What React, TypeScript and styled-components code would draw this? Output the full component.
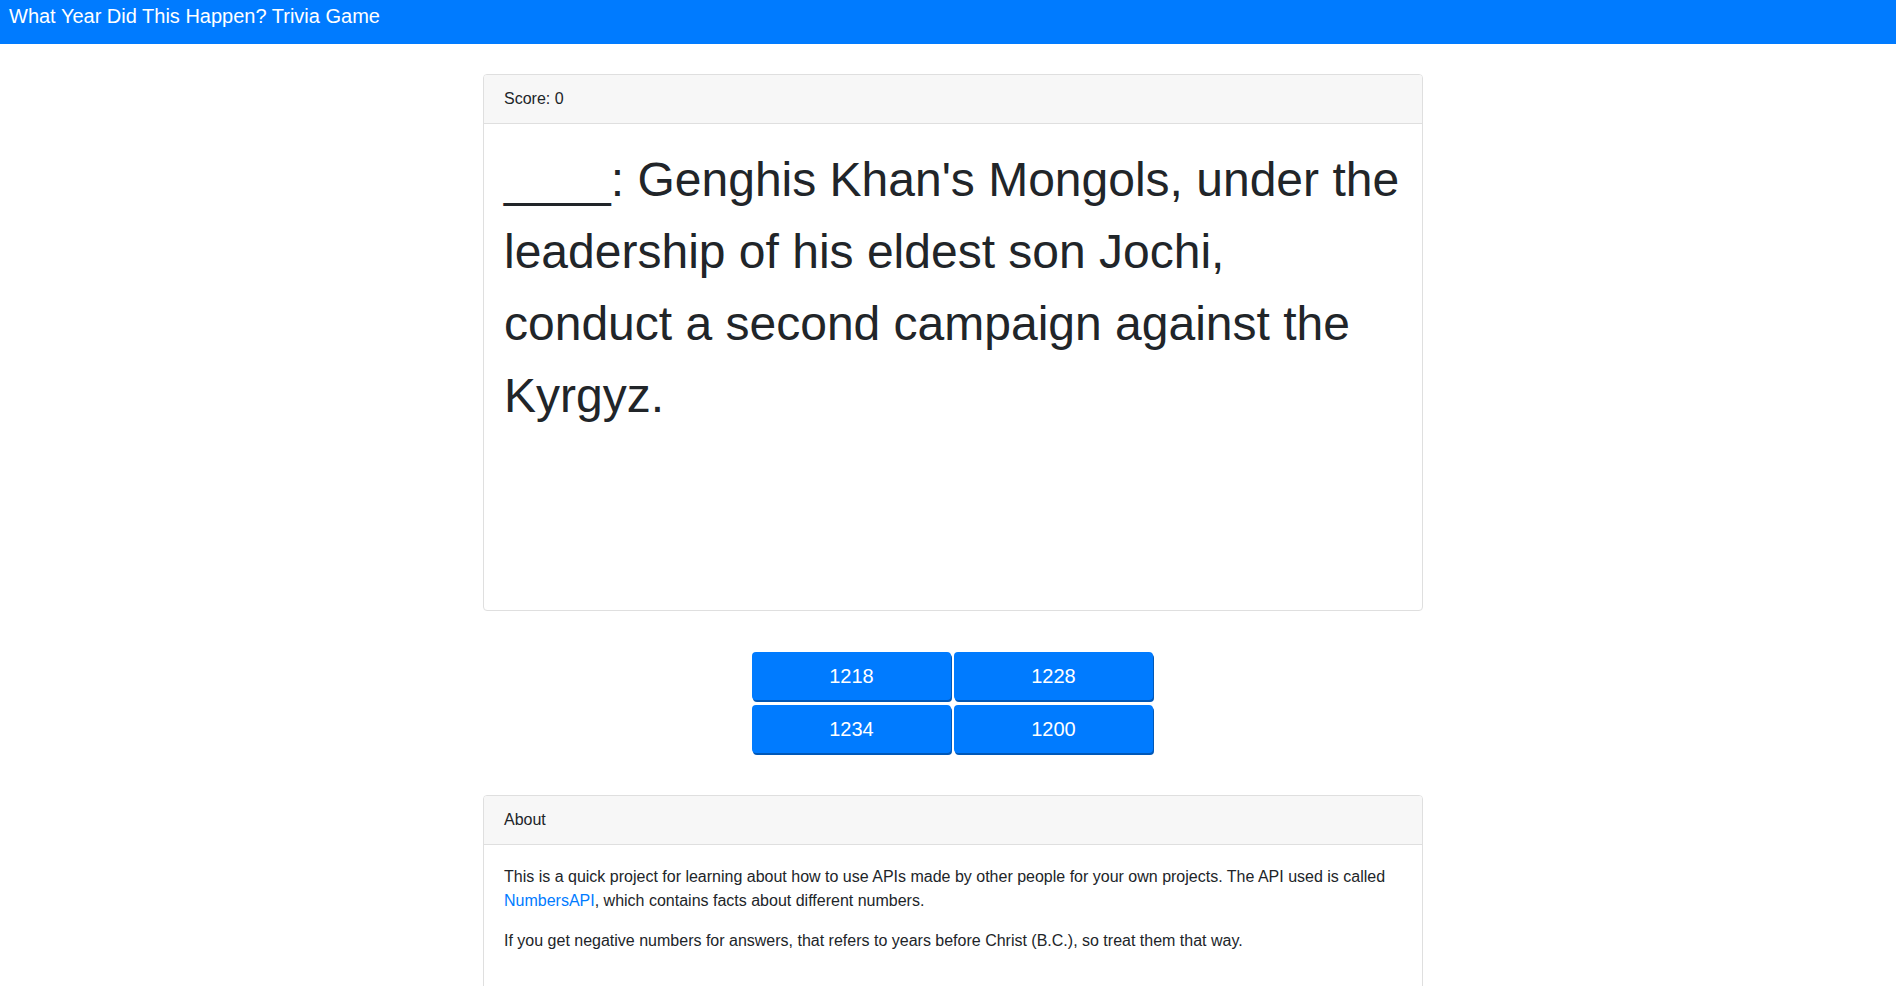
import React from 'react'
import styled, { createGlobalStyle } from 'styled-components'

const GlobalStyle = createGlobalStyle`
  html, body {
    margin: 0;
    padding: 0;
    background: #fff;
    font-family: "Liberation Sans", Arial, sans-serif;
    color: #212529;
    font-size: 16px;
    line-height: 1.5;
  }
  * { box-sizing: border-box; }
`

const TopBar = styled.header`
  height: 44px;
  background: #007bff;
  color: #fff;
  padding: 4px 9px;
  font-size: 20px;
  line-height: 24px;
`

const Page = styled.main`
  padding-left: 10px;
`

const Column = styled.div`
  width: 940px;
  margin: 30px auto 0;
  display: flex;
  flex-direction: column;
`

const Card = styled.section`
  border: 1px solid #dfdfdf;
  border-radius: 4px;
  background: #fff;
  overflow: hidden;
`

const CardHeader = styled.div`
  padding: 12px 20px;
  background: #f7f7f7;
  border-bottom: 1px solid #dfdfdf;
  line-height: 24px;
`

const CardBody = styled.div<{ $minHeight?: number }>`
  padding: 20px;
  min-height: ${p => (p.$minHeight ? `${p.$minHeight}px` : 'auto')};
`

const Question = styled.h1`
  margin: 0;
  font-size: 48px;
  font-weight: 400;
  line-height: 72px;
`

const Answers = styled.div`
  display: grid;
  grid-template-columns: 199px 199px;
  column-gap: 3px;
  row-gap: 5px;
  justify-content: center;
  margin: 41px 0 42px;
  padding-right: 1px;
`

const AnswerButton = styled.button`
  height: 48px;
  border: none;
  border-radius: 4px;
  background: #007bff;
  color: #fff;
  font-family: "Liberation Sans", Arial, sans-serif;
  font-size: 20px;
  line-height: 30px;
  padding-top: 1px;
  box-shadow: 1px 2px 0 #0058b8;
  cursor: pointer;
`

const Para = styled.p`
  margin: 0 0 16px;
`

const Link = styled.a`
  color: #007bff;
  text-decoration: none;
`

const answers = ['1218', '1228', '1234', '1200']

export default function App() {
  return (
    <>
      <GlobalStyle />
      <TopBar>What Year Did This Happen? Trivia Game</TopBar>
      <Page>
        <Column>
          <Card>
            <CardHeader>Score: 0</CardHeader>
            <CardBody $minHeight={486}>
              <Question>
                ____: Genghis Khan's Mongols, under the leadership of his eldest son Jochi,
                conduct a second campaign against the Kyrgyz.
              </Question>
            </CardBody>
          </Card>
          <Answers>
            {answers.map(a => (
              <AnswerButton key={a}>{a}</AnswerButton>
            ))}
          </Answers>
          <Card>
            <CardHeader>About</CardHeader>
            <CardBody>
              <Para>
                This is a quick project for learning about how to use APIs made by other people for
                your own projects. The API used is called <Link href="#">NumbersAPI</Link>, which
                contains facts about different numbers.
              </Para>
              <Para>
                If you get negative numbers for answers, that refers to years before Christ (B.C.), so
                treat them that way.
              </Para>
            </CardBody>
          </Card>
        </Column>
      </Page>
    </>
  )
}
